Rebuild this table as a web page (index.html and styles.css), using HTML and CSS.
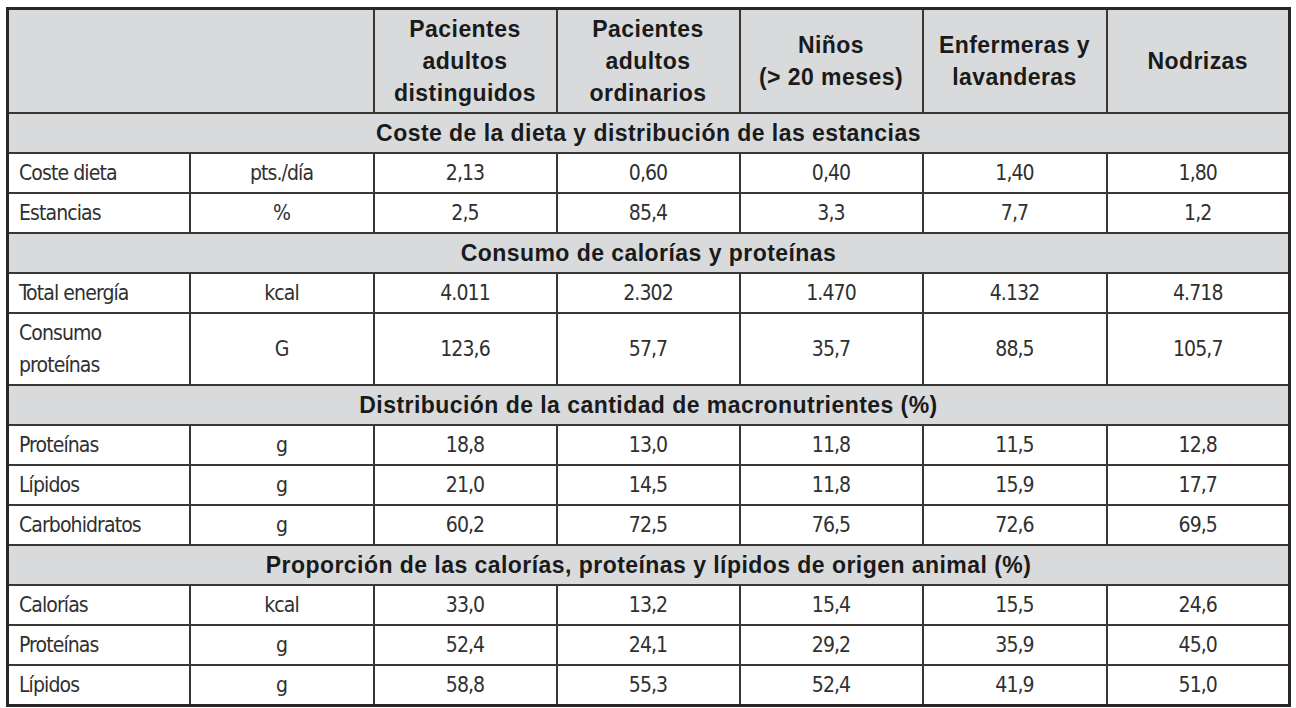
FILE: index.html
```html
<!DOCTYPE html>
<html lang="es">
<head>
<meta charset="utf-8">
<title>Dietas</title>
<link rel="stylesheet" href="styles.css">
</head>
<body>
<table class="diet">
  <colgroup>
    <col class="c-label"><col class="c-unit"><col class="c-d1"><col class="c-d2"><col class="c-d3"><col class="c-d4"><col class="c-d5">
  </colgroup>
  <thead>
    <tr class="head">
      <th colspan="2"></th>
      <th>Pacientes<br>adultos<br>distinguidos</th>
      <th>Pacientes<br>adultos<br>ordinarios</th>
      <th>Niños<br>(&gt; 20 meses)</th>
      <th>Enfermeras y<br>lavanderas</th>
      <th>Nodrizas</th>
    </tr>
  </thead>
  <tbody>
    <tr class="section"><th colspan="7">Coste de la dieta y distribución de las estancias</th></tr>
    <tr><td class="label">Coste dieta</td><td>pts./día</td><td>2,13</td><td>0,60</td><td>0,40</td><td>1,40</td><td>1,80</td></tr>
    <tr><td class="label">Estancias</td><td>%</td><td>2,5</td><td>85,4</td><td>3,3</td><td>7,7</td><td>1,2</td></tr>
    <tr class="section"><th colspan="7">Consumo de calorías y proteínas</th></tr>
    <tr><td class="label">Total energía</td><td>kcal</td><td>4.011</td><td>2.302</td><td>1.470</td><td>4.132</td><td>4.718</td></tr>
    <tr class="tall"><td class="label">Consumo<br>proteínas</td><td>G</td><td>123,6</td><td>57,7</td><td>35,7</td><td>88,5</td><td>105,7</td></tr>
    <tr class="section"><th colspan="7">Distribución de la cantidad de macronutrientes (%)</th></tr>
    <tr><td class="label">Proteínas</td><td>g</td><td>18,8</td><td>13,0</td><td>11,8</td><td>11,5</td><td>12,8</td></tr>
    <tr><td class="label">Lípidos</td><td>g</td><td>21,0</td><td>14,5</td><td>11,8</td><td>15,9</td><td>17,7</td></tr>
    <tr><td class="label">Carbohidratos</td><td>g</td><td>60,2</td><td>72,5</td><td>76,5</td><td>72,6</td><td>69,5</td></tr>
    <tr class="section"><th colspan="7">Proporción de las calorías, proteínas y lípidos de origen animal (%)</th></tr>
    <tr><td class="label">Calorías</td><td>kcal</td><td>33,0</td><td>13,2</td><td>15,4</td><td>15,5</td><td>24,6</td></tr>
    <tr><td class="label">Proteínas</td><td>g</td><td>52,4</td><td>24,1</td><td>29,2</td><td>35,9</td><td>45,0</td></tr>
    <tr><td class="label">Lípidos</td><td>g</td><td>58,8</td><td>55,3</td><td>52,4</td><td>41,9</td><td>51,0</td></tr>
  </tbody>
</table>
</body>
</html>
```

FILE: styles.css
```css
html, body {
  margin: 0;
  padding: 0;
  background: #ffffff;
}

body {
  padding: 7px 0 0 6px;
}

.diet {
  border-collapse: collapse;
  table-layout: fixed;
  width: 1284px;
  border: 3px solid #2b2623;
  color: #262626;
}

.c-label { width: 182px; }
.c-unit { width: 184px; }
.c-d1 { width: 183px; }
.c-d2 { width: 183px; }
.c-d3 { width: 183px; }
.c-d4 { width: 184px; }
.c-d5 { width: 183px; }

.diet th,
.diet td {
  border: 2px solid #3a3633;
  padding: 0;
  text-align: center;
  vertical-align: middle;
}

.diet td {
  font-family: "DejaVu Sans Condensed", "DejaVu Sans", sans-serif;
  font-size: 21px;
  letter-spacing: -0.9px;
  line-height: 32px;
  height: 38px;
  color: #303030;
}

.diet td.label {
  text-align: left;
  padding-left: 10px;
}

.diet tr.tall td {
  height: 70px;
}

.diet th {
  font-family: "Liberation Sans", Arial, sans-serif;
  font-weight: bold;
  font-size: 23px;
  letter-spacing: 0.45px;
  color: #1a1a1a;
  background: #d9dadc;
}

.head th {
  height: 102px;
  line-height: 32px;
}

.section th {
  height: 38px;
  line-height: 26px;
}
```
